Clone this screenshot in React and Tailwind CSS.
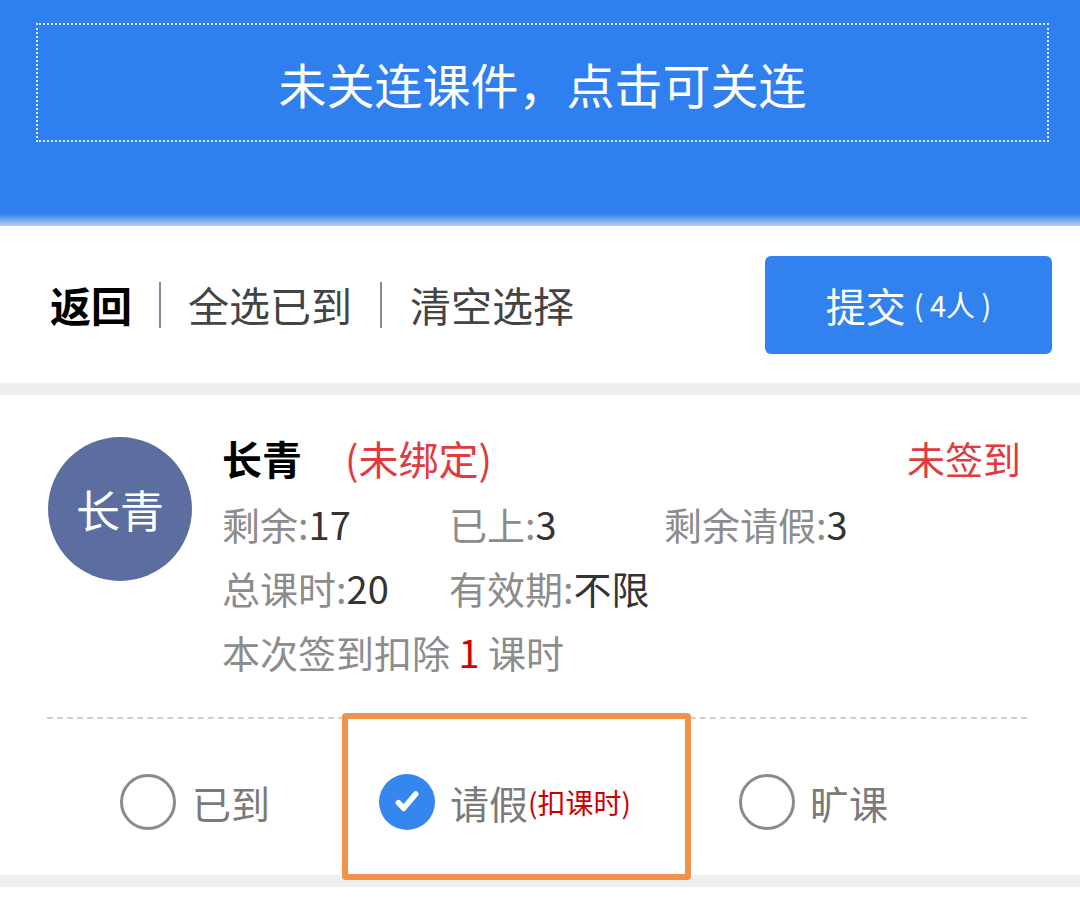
const font = { fontFamily: '"Noto Sans CJK SC", "Noto Sans", sans-serif' };

const Radio = ({ checked }) =>
  checked ? (
    <span className="flex h-[56px] w-[56px] items-center justify-center rounded-full bg-[#3587ef]">
      <svg width="32" height="32" viewBox="0 0 24 24" fill="none">
        <path d="M5.5 12.5l4 4.2L18.5 6" stroke="white" strokeWidth="4.2" strokeLinecap="round" strokeLinejoin="round" />
      </svg>
    </span>
  ) : (
    <span className="h-[56px] w-[56px] rounded-full border-[3px] border-[#8a8a8a]" />
  );

const Stat = ({ label, value, className = '' }) => (
  <div className={className}>
    <span className="text-[#8c8c8c]">{label}:</span>
    <span className="text-[#333]">{value}</span>
  </div>
);

export default function App() {
  return (
    <div className="relative w-[1080px] h-[914px] overflow-hidden bg-white" style={font}>
      {/* header */}
      <div className="h-[214px] bg-[#2f80ee] pl-[36px] pr-[31px] pt-[23px]">
        <div className="flex h-[119px] items-center justify-center border-2 border-dotted border-white/85">
          <span className="text-[48px] leading-none text-white">未关连课件，点击可关连</span>
        </div>
      </div>
      <div className="h-[12px] bg-linear-to-b from-[#2f80ee] to-[#b3cff4]" />

      {/* toolbar */}
      <div className="flex h-[157px] items-center justify-between pl-[50px] pr-[28px]">
        <div className="flex items-center text-[41px] leading-none">
          <span className="font-bold text-black">返回</span>
          <span className="mx-[27px] h-[46px] w-[2px] bg-[#8a8a8a]" />
          <span className="text-[#444]">全选已到</span>
          <span className="mx-[28px] h-[46px] w-[2px] bg-[#8a8a8a]" />
          <span className="text-[#444]">清空选择</span>
        </div>
        <button className="flex h-[98px] w-[287px] items-center justify-center rounded-[6px] bg-[#3182ee] text-white">
          <span className="text-[40px] leading-none">提交</span>
          <span className="ml-[8px] text-[29px] leading-none">( 4人 )</span>
        </button>
      </div>
      <div className="h-[12px] bg-[#efefef]" />

      {/* card */}
      <div className="pt-[42px]">
        <div className="flex pl-[48px] pr-[59px]">
          <div className="flex h-[144px] w-[144px] shrink-0 items-center justify-center rounded-full bg-[#5c6e9f]">
            <span className="text-[44px] leading-none text-white">长青</span>
          </div>
          <div className="ml-[30px] flex-1 -mt-[3px]">
            <div className="flex h-[48px] items-center">
              <span className="text-[40px] font-bold leading-none text-black">长青</span>
              <span className="ml-[43px] text-[40px] leading-none text-[#e03b3e]">(未绑定)</span>
              <span className="ml-auto text-[38px] leading-none text-[#e03b3e]">未签到</span>
            </div>
            <div className="mt-[10px] text-[38px] leading-[64px]">
              <div className="flex">
                <Stat className="w-[227px]" label="剩余" value="17" />
                <Stat className="w-[215px]" label="已上" value="3" />
                <Stat label="剩余请假" value="3" />
              </div>
              <div className="flex">
                <Stat className="w-[227px]" label="总课时" value="20" />
                <Stat label="有效期" value="不限" />
              </div>
              <div className="text-[#8c8c8c]">
                本次签到扣除 <span className="text-[#d40000]">1</span> 课时
              </div>
            </div>
          </div>
        </div>

        <div className="ml-[47px] mr-[53px] mt-[33px] border-t-2 border-dashed border-[#cfcfcf]" />

        <div className="flex h-[156px] items-center pl-[120px] pt-[10px] text-[39px] leading-none text-[#7a7a7a]">
          <div className="flex w-[259px] items-center">
            <Radio />
            <span className="ml-[16px]">已到</span>
          </div>
          <div className="flex w-[360px] items-center">
            <Radio checked />
            <span className="ml-[15px]">请假</span>
            <span className="text-[28px] text-[#cc0000]">(扣课时)</span>
          </div>
          <div className="flex items-center">
            <Radio />
            <span className="ml-[15px]">旷课</span>
          </div>
        </div>
      </div>
      <div className="h-[12px] bg-[#efefef]" />

      {/* highlight annotation */}
      <div className="absolute left-[342px] top-[713px] h-[167px] w-[349px] rounded-[4px] border-[6px] border-[#f29249]" />
    </div>
  );
}
